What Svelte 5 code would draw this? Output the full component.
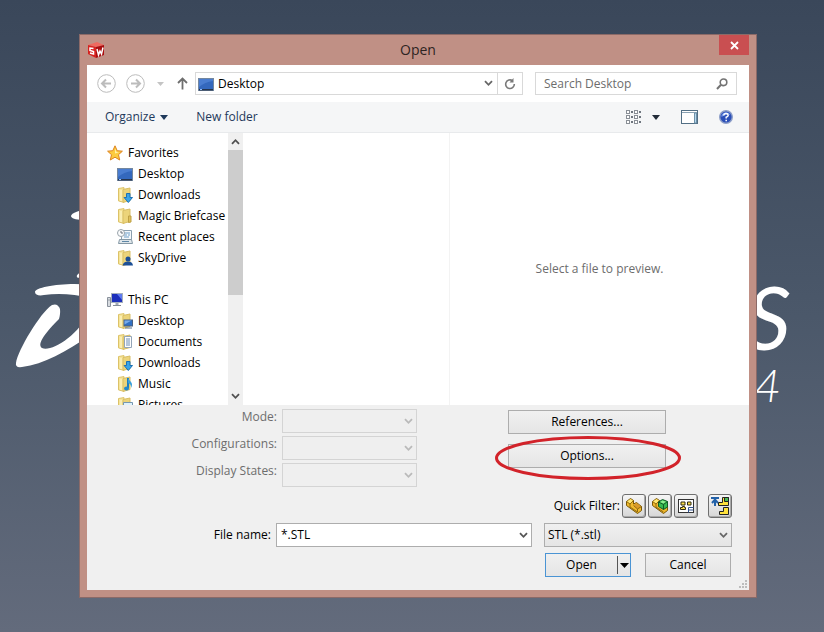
<script lang="ts">
	type Place = { name: string; kind: string };

	const groups: { name: string; kind: string; places: Place[] }[] = [
		{
			name: "Favorites",
			kind: "star",
			places: [
				{ name: "Desktop", kind: "screen" },
				{ name: "Downloads", kind: "download" },
				{ name: "Magic Briefcase", kind: "folder" },
				{ name: "Recent places", kind: "recent" },
				{ name: "SkyDrive", kind: "user" },
			],
		},
		{
			name: "This PC",
			kind: "pc",
			places: [
				{ name: "Desktop", kind: "desktop" },
				{ name: "Documents", kind: "document" },
				{ name: "Downloads", kind: "download" },
				{ name: "Music", kind: "music" },
				{ name: "Pictures", kind: "picture" },
			],
		},
	];

	const fields = [
		{ id: "mode", label: "Mode:" },
		{ id: "configurations", label: "Configurations:" },
		{ id: "display-states", label: "Display States:" },
	];

	let location = $state("Desktop");
	let query = $state("");
	let fileName = $state("*.STL");
	let fileType = $state("stl");
</script>

{#snippet chevron()}
	<svg class="chevron" width="9" height="7" viewBox="0 0 9 7" aria-hidden="true">
		<path d="M1 1.200 4.500 4.800 8 1.200" fill="none" stroke="currentColor" stroke-width="1.800" />
	</svg>
{/snippet}

{#snippet screen()}
	<svg width="16" height="16" viewBox="0 0 16 16" aria-hidden="true">
		<rect x="0.5" y="2.5" width="15" height="12" fill="#3468bd" stroke="#73879f" />
		<path d="M1 3h14v2Q7 6 1 11Z" fill="#4a7dd0" />
		<path d="M1 13h14v1.500H1Z" fill="#26354d" />
		<path d="M2 13.500h2" stroke="#8fc1ff" />
	</svg>
{/snippet}

{#snippet placeIcon(kind: string)}
	{#if kind === "screen"}
		{@render screen()}
	{:else if kind === "star"}
		<svg width="16" height="16" viewBox="0 0 16 16" aria-hidden="true">
			<path
				d="M8 .8 10.200 5.700 15.400 6.200 11.500 9.700 12.700 15 8 12.200 3.300 15 4.500 9.700 .6 6.200 5.800 5.700Z"
				fill="#fccb3f"
				stroke="#dd8420"
				stroke-linejoin="round"
			/>
			<path d="M8 3.500 9.300 6.800 12 7.200 8 8.500Z" fill="#fff0a8" />
		</svg>
	{:else if kind === "pc"}
		<svg width="16" height="16" viewBox="0 0 16 16" aria-hidden="true">
			<path d="M.5 5.500h3v9h-3Z" fill="#d7dbe0" stroke="#8a929c" />
			<path d="M1.500 8h1" stroke="#5a626c" />
			<rect x="4.500" y="1.500" width="11" height="9" fill="#1c2fbb" stroke="#a5afbd" />
			<path d="M10 2h5v6Z" fill="#5f7bf0" />
			<path d="M8.500 11h3v2h-3Z" fill="#a3abb5" />
			<path d="M6 13.500h8" stroke="#848d98" />
		</svg>
	{:else if kind === "recent"}
		<svg width="16" height="16" viewBox="0 0 16 16" aria-hidden="true">
			<path d="M4.500 1.500h10v9h-10Z" fill="#f4f8fb" stroke="#8ba0b0" />
			<path d="M7 4h6M7 6h3M11 6h2M7 8h5" stroke="#6b9dc8" />
			<path d="M2.500 10.500h12l1 4h-14Z" fill="#dfe6ea" stroke="#8598a5" />
			<path d="M5 12.500h7" stroke="#5f87a6" />
			<circle cx="4" cy="4" r="3.500" fill="#fbfcfd" stroke="#98a2aa" />
			<path d="M4 2v2h2" fill="none" stroke="#68717a" />
		</svg>
	{:else}
		<svg width="16" height="16" viewBox="0 0 16 16" aria-hidden="true">
			<path d="M1.500 1.500 7 .6v14.800l-5.500-1.500Z" fill="#f6e59a" stroke="#dcc268" />
			<path d="M6 2.500 13 1v12.500l-7 1.900Z" fill="#ecd47a" stroke="#d8be66" />
			<path d="M4 3v11" stroke="#fff7cc" />
			{#if kind === "download"}
				<path
					d="M9.500 6.500h3.500v4h2.500l-4.200 5-4.200-5h2.400Z"
					fill="#3aa5e8"
					stroke="#1d71b5"
				/>
			{:else if kind === "folder"}
				<path d="M11.500 8h2.500v6l-2.500 .5Z" fill="#e0c25e" stroke="#bfa144" />
			{:else if kind === "user"}
				<circle cx="11" cy="9" r="2.500" fill="#1c4f96" />
				<path d="M5.500 15.500q1-4 5.500-4t5 4Z" fill="#1c4f96" />
			{:else if kind === "desktop"}
				<rect x="7" y="7" width="8.500" height="6" fill="#3070c4" stroke="#4a6180" />
				<path d="M7.500 7.500h7l-7 4Z" fill="#76aaea" />
				<path d="M8 15h7" stroke="#5b708c" />
			{:else if kind === "document"}
				<path d="M7.500 2.500h7v11h-7Z" fill="#fdfdfd" stroke="#93a5b8" />
				<path d="M9 5h4M9 7h4M9 9h4M9 11h4" stroke="#6c8fb9" />
			{:else if kind === "music"}
				<path d="M11 2v10" stroke="#1d7dc0" stroke-width="2" />
				<path d="M11 2q1 2 3 4t0 6q.5-4-3-5Z" fill="#38a0dd" />
				<ellipse cx="9.500" cy="12.500" rx="2.500" ry="2" fill="#2289cd" />
			{:else if kind === "picture"}
				<path d="M6.500 5.500h9v8h-9Z" fill="#dff1fb" stroke="#7597b2" />
				<path d="M7 13l3-4 2 2 2-2 1.500 2v2Z" fill="#4a9c64" />
			{/if}
		</svg>
	{/if}
{/snippet}

<main class="desktop">
	<svg class="wallpaper" viewBox="0 0 824 632" aria-hidden="true">
		<g fill="#fff">
			<path d="M90 209c-10 1-19 4-19 7s9 5 19 3Z" />
			<path d="M88 269c-9 3-12 6-11 8s5 0 11-2Z" />
			<path d="M90 285C66 282 35 287 35 292c0 3 4 4 9 3 14-2 31-1 46 3Z" />
			<path
				d="M52 305C40 313 18 350 16 363q-1 5 6 4C44 364 66 352 90 335V310C78 337 51 352 42 348c-6-4 5-17 17-29 1-3 2-10 0-12-2-3-4-3-7-2Z"
			/>
		</g>
		<text class="brand" x="791" y="350" text-anchor="end">S</text>
		<text class="year" x="781" y="402" text-anchor="end">4</text>
	</svg>

	<div class="window" role="dialog" aria-labelledby="dialog-title">
		<header class="titlebar">
			<svg class="app-icon" width="18" height="18" viewBox="0 0 18 18" aria-hidden="true">
				<path d="M1 4 10 1l7 3-7 2Z" fill="#ef6a60" />
				<path d="M1 4 9 6v11l-8-4Z" fill="#d6221f" />
				<path d="M9 6l8-2v10l-8 3Z" fill="#a90e10" />
				<path
					d="M6.500 7.500 3 7v2.500l3.500 1V13L3 12M10 8l1.500 6 1.500-4 1.500 3L16 6.500"
					fill="none"
					stroke="#fff"
					stroke-width="1.500"
				/>
			</svg>
			<h1 id="dialog-title">Open</h1>
			<button type="button" class="close" aria-label="Close">
				<svg width="9" height="9" viewBox="0 0 9 9" aria-hidden="true">
					<path d="M1 1l7 7M8 1 1 8" stroke="#fff" stroke-width="1.800" />
				</svg>
			</button>
		</header>

		<div class="client">
			<nav class="address-row" aria-label="Location">
				<button type="button" class="plain" aria-label="Back" disabled>
					<svg width="19" height="19" viewBox="0 0 19 19" aria-hidden="true">
						<circle cx="9.500" cy="9.500" r="8.800" fill="#fff" stroke="#bcbcbc" />
						<path
							d="M14 9.500H5.500M9 5.500l-4 4 4 4"
							fill="none"
							stroke="#bcbcbc"
							stroke-width="2"
						/>
					</svg>
				</button>
				<button type="button" class="plain" aria-label="Forward" disabled>
					<svg width="19" height="19" viewBox="0 0 19 19" aria-hidden="true">
						<circle cx="9.500" cy="9.500" r="8.800" fill="#fff" stroke="#bcbcbc" />
						<path
							d="M5 9.500h8.500M10 5.500l4 4-4 4"
							fill="none"
							stroke="#bcbcbc"
							stroke-width="2"
						/>
					</svg>
				</button>
				<button type="button" class="plain recent" aria-label="Recent locations">
					<svg width="7" height="4" viewBox="0 0 7 4" aria-hidden="true">
						<path d="M0 0h7L3.500 4Z" fill="#c4c4c4" />
					</svg>
				</button>
				<button type="button" class="plain up" aria-label="Up one level">
					<svg width="11" height="13" viewBox="0 0 11 13" aria-hidden="true">
						<path
							d="M5.500 12.500V2M1 6l4.500-4.500L10 6"
							fill="none"
							stroke="#6e6e6e"
							stroke-width="1.800"
						/>
					</svg>
				</button>
				<div class="box address">
					{@render screen()}
					<input type="text" aria-label="Address" bind:value={location} />
					<button type="button" class="plain" aria-label="Previous locations">
						{@render chevron()}
					</button>
					<button type="button" class="plain refresh" aria-label="Refresh">
						<svg width="12" height="12" viewBox="0 0 12 12" aria-hidden="true">
							<path
								d="M8.500 2.700A4.300 4.300 0 1 0 10.300 6"
								fill="none"
								stroke="#7a7a7a"
								stroke-width="1.600"
							/>
							<path d="M5.500 4.500h4V0Z" fill="#7a7a7a" />
						</svg>
					</button>
				</div>
				<div class="box search">
					<input
						type="text"
						aria-label="Search"
						placeholder="Search Desktop"
						bind:value={query}
					/>
					<svg width="12" height="12" viewBox="0 0 12 12" aria-hidden="true">
						<circle cx="7.500" cy="4.300" r="3.300" fill="none" stroke="#737373" stroke-width="1.600" />
						<path d="M5 6.800 1 11" stroke="#737373" stroke-width="2" />
					</svg>
				</div>
			</nav>

			<div class="toolbar">
				<button type="button" class="plain command">
					Organize
					<svg width="8" height="5" viewBox="0 0 8 5" aria-hidden="true">
						<path d="M0 0h8L4 5Z" fill="#1e395b" />
					</svg>
				</button>
				<button type="button" class="plain command">New folder</button>
				<div class="views">
					<button type="button" class="plain view" aria-label="Change your view">
						<svg width="16" height="14" viewBox="0 0 16 14" aria-hidden="true">
							{#each [0, 8] as x}
								{#each [0, 5, 10] as y}
									<rect
										x={x + 0.5}
										y={y + 0.5}
										width="3"
										height="3"
										fill="#fff"
										stroke="#8a8f96"
									/>
									<path d="M{x + 5} {y + 2}h2" stroke="#6f767f" stroke-width="2" />
								{/each}
							{/each}
						</svg>
						<svg width="8" height="5" viewBox="0 0 8 5" aria-hidden="true">
							<path d="M0 0h8L4 5Z" fill="#222c38" />
						</svg>
					</button>
					<button type="button" class="plain" aria-label="Hide the preview pane">
						<svg width="17" height="14" viewBox="0 0 17 14" aria-hidden="true">
							<rect x="0.500" y="0.500" width="16" height="13" fill="#fff" stroke="#526f85" />
							<path d="M1 2.500h15" stroke="#8aa2b3" />
							<path d="M13.500 3h2v10h-2Z" fill="#b7d9ee" stroke="#6d90a8" />
						</svg>
					</button>
					<button type="button" class="plain" aria-label="Get help">
						<svg width="14" height="14" viewBox="0 0 14 14" aria-hidden="true">
							<circle cx="7" cy="7" r="6.300" fill="#2b4fb8" stroke="#8e9fc8" stroke-width="1.400" />
							<path d="M2.500 5a5 5 0 0 1 9 0Q7 3.500 2.500 7Z" fill="#7799e8" />
							<path
								d="M4.800 5.500Q5 3.500 7 3.500t2.200 1.800Q9.200 6.500 7.200 7.300V8.500M7.200 9.800v1.500"
								fill="none"
								stroke="#fff"
								stroke-width="1.500"
							/>
						</svg>
					</button>
				</div>
			</div>

			<div class="panes">
				<div class="tree">
					{#each groups as group}
						<section>
							<button type="button" class="plain place">
								{@render placeIcon(group.kind)}{group.name}
							</button>
							{#each group.places as place}
								<button type="button" class="plain place child">
									{@render placeIcon(place.kind)}{place.name}
								</button>
							{/each}
						</section>
					{/each}
				</div>
				<div class="scrollbar">
					<button type="button" class="plain flip" aria-label="Scroll up">
						{@render chevron()}
					</button>
					<div class="thumb"></div>
					<button type="button" class="plain" aria-label="Scroll down">
						{@render chevron()}
					</button>
				</div>
				<div class="files"></div>
				<div class="preview">Select a file to preview.</div>
			</div>

			<footer>
				<div class="settings">
					<div class="fields">
						{#each fields as field}
							<label for={field.id}>{field.label}</label>
							<div class="combo">
								<select id={field.id} disabled></select>
								{@render chevron()}
							</div>
						{/each}
					</div>
					<div class="extras">
						<button type="button" class="push">References...</button>
						<div class="marked">
							<button type="button" class="push">Options...</button>
							<svg class="ring" width="186" height="44" viewBox="0 0 186 44" aria-hidden="true">
								<ellipse
									cx="93"
									cy="22"
									rx="91.500"
									ry="20.500"
									fill="none"
									stroke="#d2232a"
									stroke-width="3"
								/>
							</svg>
						</div>
					</div>
				</div>

				<div class="filters">
					<span>Quick Filter:</span>
					<button type="button" class="tool" aria-label="Filter parts">
						<svg width="18" height="18" viewBox="0 0 18 18" aria-hidden="true">
							<path
								d="M1.500 4.500 5.500 1.500 8.500 3.500v3.500l3-1.500 5 4v4l-4 3L1.500 8.500Z"
								fill="#f0b92c"
								stroke="#7a5808"
								stroke-linejoin="round"
							/>
							<path d="M2 4.500l3.500-2.500L8 3.700 5 6.500Z" fill="#ffe873" />
							<path d="M8.500 8l3-2 4.500 3.500-3.500 2.500Z" fill="#d99a2b" />
							<path
								d="M1.500 4.500 5 7v3l7.500 5v-3L8.500 8.500M5 7l3.500-3.500M12.500 12l4-2.500"
								fill="none"
								stroke="#7a5808"
								stroke-width="0.800"
							/>
						</svg>
					</button>
					<button type="button" class="tool" aria-label="Filter assemblies">
						<svg width="18" height="18" viewBox="0 0 18 18" aria-hidden="true">
							<path
								d="M1.500 4.500 5.500 1.500 8.500 3.500v3.500l3-1.500 5 4v4l-4 3L1.500 8.500Z"
								fill="#f0b92c"
								stroke="#7a5808"
								stroke-linejoin="round"
							/>
							<path d="M2 4.500l3.500-2.500L8 3.700 5 6.500Z" fill="#ffe873" />
							<path
								d="M1.500 4.500 5 7v3l7.500 5M5 7l3.500-3.500"
								fill="none"
								stroke="#7a5808"
								stroke-width="0.800"
							/>
							<path
								d="M7.500 5 11.500 2.500l5 2V10L12.500 12.500 7.500 9.500Z"
								fill="#35b950"
								stroke="#0f5b27"
								stroke-linejoin="round"
							/>
							<path d="M7.500 5l5 2.500 4-3M12.500 7.500v5" fill="none" stroke="#0f5b27" />
							<path d="M9 5l2.500-1.500L15 4.800l-2.500 1.700Z" fill="#8eed91" />
						</svg>
					</button>
					<button type="button" class="tool" aria-label="Filter drawings">
						<svg width="18" height="18" viewBox="0 0 18 18" aria-hidden="true">
							<rect x="1.500" y="2.500" width="15" height="13" fill="#fff" stroke="#333" />
							<path
								d="M4 5h4v3H4ZM10.500 5h3.500v3h-3.500ZM3.500 12.500v-2h2v-1h2v1h1v2Z"
								fill="#ffe24a"
								stroke="#2e2a12"
							/>
							<path d="M11.500 15.500v-5h5M11.500 13h5" fill="none" stroke="#31538f" />
						</svg>
					</button>
					<button type="button" class="tool apart" aria-label="Filter top-level assemblies">
						<svg width="20" height="20" viewBox="0 0 20 20" aria-hidden="true">
							<path d="M1 2h8M5 10V4M2 7l3-3.500L8 7" fill="none" stroke="#2361a8" stroke-width="2" />
							<path d="M8.500 9.500V6.500h4v-5h6v8Z" fill="#ffe23c" stroke="#222" />
							<path d="M14.500 1.500h4v4h-4Z" fill="#49b957" stroke="#222" />
							<path d="M9.500 18.500v-3h4v-4h5v7Z" fill="#ffe23c" stroke="#222" />
						</svg>
					</button>
				</div>

				<div class="file-row">
					<label for="file-name">File name:</label>
					<div class="box name">
						<input id="file-name" type="text" bind:value={fileName} />
						<button type="button" class="plain" aria-label="Recent file names">
							{@render chevron()}
						</button>
					</div>
					<div class="combo type">
						<select aria-label="File type" bind:value={fileType}>
							<option value="stl">STL (*.stl)</option>
						</select>
						{@render chevron()}
					</div>
				</div>

				<div class="confirm">
					<div class="split">
						<button type="button" class="plain">Open</button>
						<button type="button" class="plain more" aria-label="Open options">
							<svg width="9" height="5" viewBox="0 0 9 5" aria-hidden="true">
								<path d="M0 0h9L4.500 5Z" fill="#000" />
							</svg>
						</button>
					</div>
					<button type="button" class="push">Cancel</button>
				</div>
				<svg class="grip" width="9" height="9" viewBox="0 0 9 9" aria-hidden="true">
					<path
						d="M6 0h2v2H6ZM3 3h2v2H3ZM6 3h2v2H6ZM0 6h2v2H0ZM3 6h2v2H3ZM6 6h2v2H6Z"
						fill="#bdbdbd"
					/>
				</svg>
			</footer>
		</div>
	</div>
</main>

<style>
	:global(body) {
		margin: 0;
	}

	.desktop {
		position: relative;
		box-sizing: border-box;
		min-height: 100vh;
		padding: 34px 67px 34px 79px;
		overflow: hidden;
		background: linear-gradient(#3a475a, #4b586a 50%, #636b7c);
		color: #000;
		font-family: "Open Sans", "Noto Sans", sans-serif;
		font-size: 12px;
		line-height: 16px;
	}

	.wallpaper {
		position: absolute;
		top: 0;
		left: 0;
		width: 100%;
	}

	.brand,
	.year {
		fill: #fff;
		font-family: Lato, sans-serif;
		font-style: italic;
	}

	.brand {
		font-size: 88px;
	}

	.year {
		font-size: 46px;
		font-weight: 300;
	}

	.window {
		position: relative;
		box-sizing: border-box;
		padding: 0 7px 7px;
		border: 1px solid #8b6a68;
		background: #c09085;
	}

	button,
	input,
	select {
		box-sizing: border-box;
		margin: 0;
		color: inherit;
		font: inherit;
	}

	svg {
		display: block;
		flex: none;
	}

	.plain {
		display: flex;
		align-items: center;
		justify-content: center;
		padding: 0;
		border: 0;
		background: none;
	}

	.titlebar {
		display: grid;
		grid-template-columns: 30px 1fr 30px;
		height: 30px;
	}

	.app-icon {
		align-self: center;
	}

	h1 {
		margin: 0;
		color: #2e2422;
		font-size: 14px;
		font-weight: 400;
		line-height: 30px;
		text-align: center;
	}

	.close {
		display: flex;
		align-items: center;
		justify-content: center;
		height: 20px;
		padding: 0;
		border: 0;
		background: #c94f51;
	}

	.client {
		background: #fff;
	}

	.address-row {
		display: flex;
		align-items: center;
		gap: 10px;
		height: 37px;
		padding: 0 12px 0 10px;
	}

	.recent {
		width: 10px;
	}

	.up {
		width: 14px;
	}

	.box {
		display: flex;
		align-items: center;
		box-sizing: border-box;
		height: 23px;
		border: 1px solid #d9d9d9;
		background: #fff;
	}

	.box input {
		flex: 1;
		min-width: 0;
		padding: 0 4px;
		border: 0;
		outline: 0;
		background: none;
	}

	.address {
		flex: 1;
		margin-left: -4px;
		padding-left: 2px;
	}

	.address > .plain {
		width: 18px;
		height: 21px;
		color: #666;
	}

	.address > .refresh {
		width: 25px;
		border-left: 1px solid #d9d9d9;
	}

	.search {
		width: 202px;
		margin-left: 2px;
		padding: 0 8px 0 4px;
	}

	.search input::placeholder {
		color: #6d6d6d;
		opacity: 1;
	}

	.toolbar {
		display: flex;
		align-items: center;
		gap: 28px;
		height: 30px;
		padding: 0 16px 0 18px;
		border-bottom: 1px solid #e8eaec;
		background: #f5f6f7;
	}

	.command {
		gap: 5px;
		color: #1e395b;
	}

	.views {
		display: flex;
		gap: 21px;
		margin-left: auto;
	}

	.view {
		gap: 10px;
	}

	.panes {
		display: flex;
		height: 272px;
	}

	.tree {
		box-sizing: border-box;
		width: 141px;
		padding-top: 9px;
		overflow: hidden;
	}

	.tree section {
		margin-bottom: 21px;
	}

	.place {
		gap: 5px;
		height: 21px;
		padding-left: 20px;
		white-space: nowrap;
	}

	.child {
		padding-left: 30px;
	}

	.scrollbar {
		display: flex;
		flex-direction: column;
		width: 15px;
		background: #f0f0f0;
	}

	.scrollbar .plain {
		height: 17px;
		color: #505050;
	}

	.flip .chevron {
		transform: rotate(180deg);
	}

	.thumb {
		height: 145px;
		margin-bottom: auto;
		background: #cdcdcd;
	}

	.files {
		width: 206px;
		border-right: 1px solid #f3f3f3;
	}

	.preview {
		display: flex;
		flex: 1;
		align-items: center;
		justify-content: center;
		color: #6d6d6d;
	}

	footer {
		position: relative;
		padding: 4px 17px 13px 0;
		background: #f0f0f0;
	}

	.settings {
		display: flex;
		justify-content: space-between;
		padding-right: 66px;
	}

	.fields {
		display: grid;
		grid-template-columns: 190px 135px;
		gap: 3px 5px;
		color: #6d6d6d;
		text-align: right;
	}

	.combo {
		display: grid;
		align-items: center;
		color: #666;
	}

	.combo > :global(*) {
		grid-area: 1 / 1;
	}

	.combo .chevron {
		justify-self: end;
		margin-right: 4px;
		pointer-events: none;
	}

	select {
		width: 100%;
		height: 24px;
		padding: 0 3px;
		border: 1px solid #adadad;
		border-radius: 0;
		appearance: none;
		background: linear-gradient(#f0f0f0, #e5e5e5);
		color: #000;
	}

	select:disabled {
		border-color: #d4d4d4;
		background: #efefef;
		opacity: 1;
	}

	.fields .chevron {
		color: #bababa;
	}

	.extras {
		display: grid;
		align-content: start;
		gap: 10px;
		width: 158px;
		padding-top: 1px;
	}

	.push {
		width: 100%;
		height: 24px;
		padding: 0;
		border: 1px solid #adadad;
		background: linear-gradient(#f0f0f0, #e5e5e5);
	}

	.marked {
		position: relative;
	}

	.ring {
		position: absolute;
		top: -8px;
		left: -13px;
		pointer-events: none;
	}

	.filters {
		display: flex;
		align-items: center;
		justify-content: flex-end;
		gap: 2px;
		margin-top: 7px;
	}

	.tool {
		display: flex;
		align-items: center;
		justify-content: center;
		width: 24px;
		height: 24px;
		padding: 0;
		border: 1px solid #6f6f6f;
		border-radius: 3px;
		background: linear-gradient(#f6f6f6, #d6d6d6);
		box-shadow: inset -1px -1px #a9a9a9;
	}

	.apart {
		margin-left: 8px;
	}

	.file-row {
		display: flex;
		align-items: center;
		margin-top: 5px;
	}

	.file-row label {
		width: 184px;
		margin-right: 5px;
		text-align: right;
	}

	.name {
		flex: 1;
		height: 24px;
		margin-right: 12px;
		border-color: #adadad;
	}

	.name .plain {
		width: 16px;
		height: 22px;
		color: #555;
	}

	.type {
		width: 188px;
	}

	.confirm {
		display: flex;
		justify-content: flex-end;
		gap: 14px;
		margin-top: 6px;
		padding-right: 1px;
	}

	.confirm > * {
		width: 86px;
	}

	.split {
		display: flex;
		box-sizing: border-box;
		height: 24px;
		border: 1px solid #4a94d4;
		background: linear-gradient(#f0f0f0, #e5e5e5);
	}

	.split .plain {
		flex: 1;
	}

	.split .more {
		flex: none;
		width: 13px;
		margin: 2px 0;
		border-left: 1px solid #555;
	}

	.grip {
		position: absolute;
		right: 1px;
		bottom: 1px;
	}
</style>
